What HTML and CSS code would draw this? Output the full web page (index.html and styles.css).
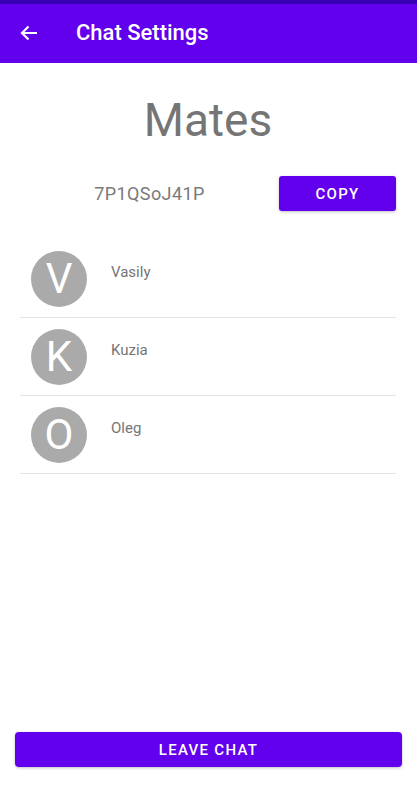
FILE: index.html
```html
<!DOCTYPE html>
<html lang="en">
<head>
<meta charset="utf-8">
<title>Chat Settings</title>
<link rel="stylesheet" href="styles.css">
</head>
<body>
<div class="screen">
  <div class="status-bar"></div>
  <header class="app-bar">
    <button class="back" aria-label="Back">
      <svg width="18" height="16" viewBox="0 0 18 16"><path d="M17 8H2.5M8.5 1.5L2 8l6.5 6.5" fill="none" stroke="#fff" stroke-width="2.2"/></svg>
    </button>
    <h1 class="title">Chat Settings</h1>
  </header>
  <main class="content">
    <h2 class="chat-name">Mates</h2>
    <div class="code-row">
      <span class="code">7P1QSoJ41P</span>
      <button class="btn btn-copy">COPY</button>
    </div>
    <ul class="members">
      <li class="member"><span class="avatar">V</span><span class="name">Vasily</span></li>
      <li class="member"><span class="avatar">K</span><span class="name">Kuzia</span></li>
      <li class="member"><span class="avatar">O</span><span class="name">Oleg</span></li>
    </ul>
  </main>
  <div class="footer">
    <button class="btn btn-leave">LEAVE CHAT</button>
  </div>
</div>
</body>
</html>
```
FILE: styles.css
```css
* { box-sizing: border-box; }
html, body { margin: 0; padding: 0; background: #fff; }
body { font-family: Roboto, "Noto Sans", sans-serif; }
.screen { width: 417px; height: 785px; display: flex; flex-direction: column; }
.status-bar { height: 4px; background: #3700b3; }
.app-bar { height: 59px; background: #6200ee; display: flex; align-items: center; padding-left: 20px; }
.back { background: none; border: 0; padding: 0; width: 18px; height: 16px; display: flex; margin-top: -2px; }
.title { margin: 0 0 0 38px; font-size: 22px; font-weight: 500; color: #fff; margin-top: -2px; }
.content { flex: 1; display: flex; flex-direction: column; padding: 0 21px 0 20px; }
.chat-name { margin: 29px 0 0; text-align: center; font-size: 46px; font-weight: 400; line-height: 56px; color: #757575; }
.code-row { display: flex; align-items: center; margin-top: 28px; }
.code { flex: 1; text-align: center; font-size: 18px; color: #7a7a7a; letter-spacing: 0.4px; }
.btn { background: #6200ee; color: #fff; border: 0; border-radius: 3px; font-family: Roboto, sans-serif; font-weight: 500; font-size: 15px; letter-spacing: 1.3px; box-shadow: 0 1px 3px rgba(0,0,0,0.25); }
.btn-copy { width: 117px; height: 35px; }
.members { list-style: none; margin: 29px 0 0; padding: 0; }
.member { display: flex; align-items: flex-start; padding: 11px 0 10px 11px; border-bottom: 1px solid #e3e3e3; }
.avatar { width: 56px; height: 56px; border-radius: 50%; background: #aaaaaa; color: #fff; font-size: 42px; line-height: 56px; text-align: center; flex: none; }
.name { margin-left: 24px; margin-top: 12px; font-size: 15px; color: #757575; }
.footer { padding: 0 15px 18px; }
.btn-leave { width: 100%; height: 35px; border-radius: 4px; }
```
